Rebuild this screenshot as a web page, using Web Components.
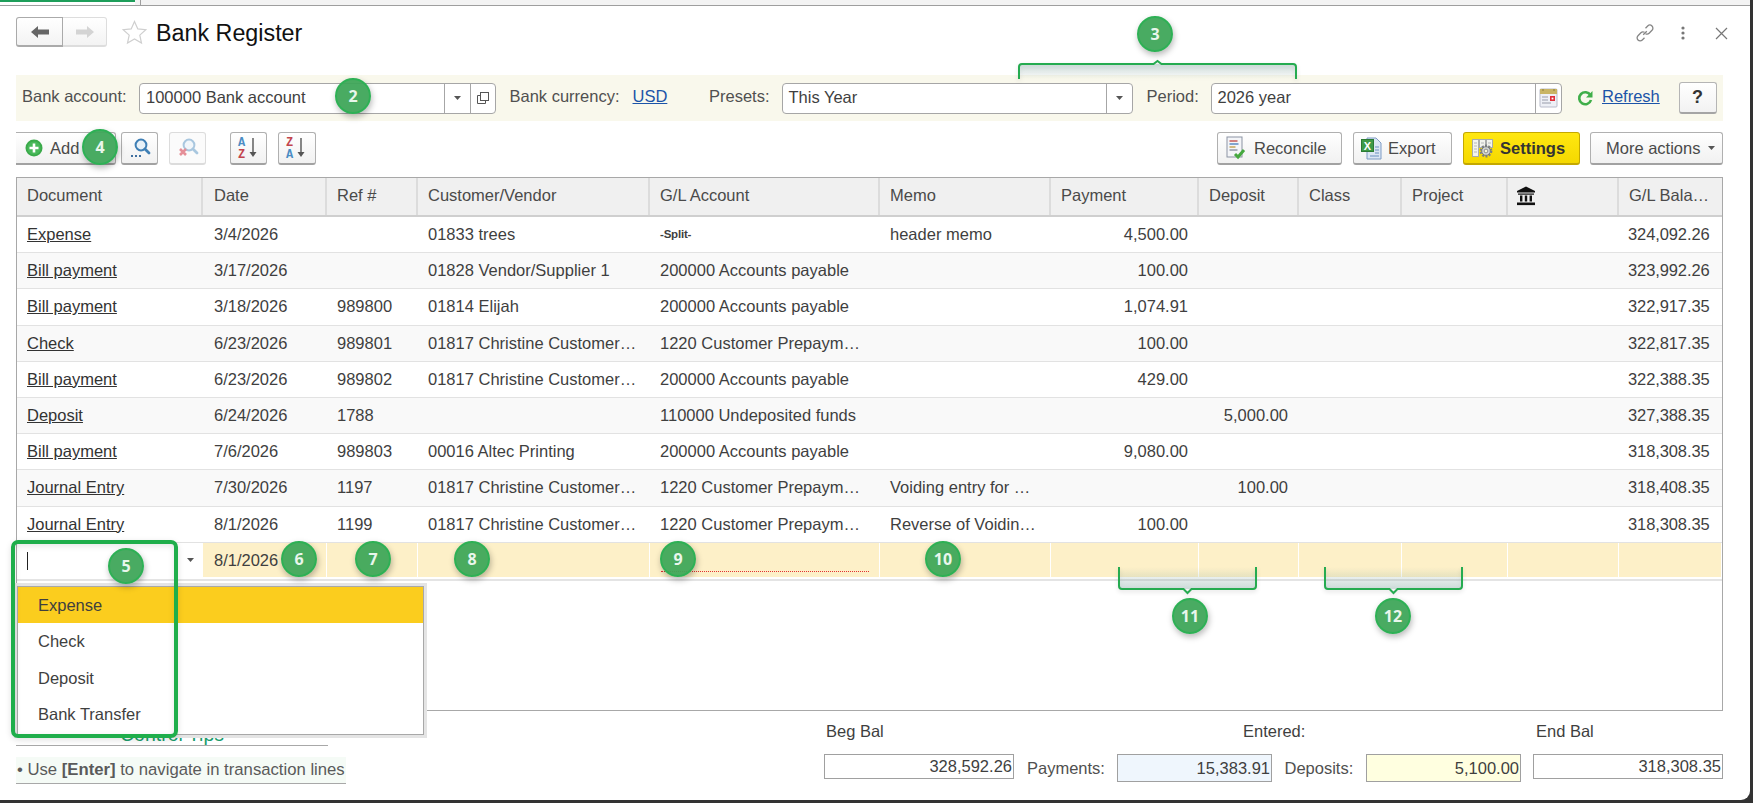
<!DOCTYPE html>
<html lang="en">
<head>
<meta charset="utf-8">
<title>Bank Register</title>
<style>
  html, body { margin: 0; padding: 0; background: #333; overflow: hidden; }
  body { width: 1753px; height: 803px; font: 16.5px "Liberation Sans", Arial, sans-serif; color: #3f3f3f; }
</style>
</head>
<body>
<br-app>
  <br-tabs slot="tabs"></br-tabs>
  <br-titlebar heading="Bank Register"></br-titlebar>
  <br-filterbar></br-filterbar>
  <br-toolbar></br-toolbar>
  <br-register></br-register>
  <br-footer></br-footer>

  <br-dropdown slot="overlay">
    <div class="active">Expense</div>
    <div>Check</div>
    <div>Deposit</div>
    <div>Bank Transfer</div>
  </br-dropdown>
  <br-callout-box slot="overlay"></br-callout-box>

  <br-bracket slot="overlay" dir="down" x="1018" y="60" w="279"></br-bracket>
  <br-bracket slot="overlay" dir="up" x="1118" y="567" w="139"></br-bracket>
  <br-bracket slot="overlay" dir="up" x="1324" y="567" w="139"></br-bracket>

  <br-badge slot="overlay" x="335" y="78">2</br-badge>
  <br-badge slot="overlay" x="1137" y="16">3</br-badge>
  <br-badge slot="overlay" x="82" y="129">4</br-badge>
  <br-badge slot="overlay" x="108" y="548">5</br-badge>
  <br-badge slot="overlay" x="281" y="541">6</br-badge>
  <br-badge slot="overlay" x="355" y="541">7</br-badge>
  <br-badge slot="overlay" x="454" y="541">8</br-badge>
  <br-badge slot="overlay" x="660" y="541">9</br-badge>
  <br-badge slot="overlay" x="925" y="541">10</br-badge>
  <br-badge slot="overlay" x="1172" y="598">11</br-badge>
  <br-badge slot="overlay" x="1375" y="598">12</br-badge>
</br-app>

<script>
// shared icons, all drawn by hand
const ICONS = {
  add: `<svg width="18" height="18" viewBox="0 0 18 18"><circle cx="9" cy="9" r="8.5" fill="#3aaa4a"/><circle cx="9" cy="9" r="6.6" fill="#49b85a"/><path d="M9 4.5v9M4.5 9h9" stroke="#fff" stroke-width="2.6"/></svg>`,
  search: `<svg width="22" height="22" viewBox="0 0 22 22"><circle cx="12" cy="8" r="5.4" fill="#e8f1f8" stroke="#3f7fb5" stroke-width="2"/><path d="M16 12l4 4" stroke="#3f7fb5" stroke-width="2.8" stroke-linecap="round"/><path d="M2 19h2M6 19h2M10 19h2" stroke="#3f6f9f" stroke-width="2"/></svg>`,
  clear: `<svg width="22" height="22" viewBox="0 0 22 22"><circle cx="12" cy="8" r="5.4" fill="#f1f6fa" stroke="#a9c7df" stroke-width="2"/><path d="M16 12l4 4" stroke="#a9c7df" stroke-width="2.8" stroke-linecap="round"/><path d="M3 12l6 6M9 12l-6 6" stroke="#e58f98" stroke-width="2.6"/></svg>`,
  az: `<svg width="24" height="26" viewBox="0 0 24 26"><text x="1" y="11" font-family="Liberation Mono" font-weight="700" font-size="12" fill="#4a8cc4">A</text><text x="1" y="23" font-family="Liberation Mono" font-weight="700" font-size="12" fill="#c2444c">Z</text><path d="M16 3v17" stroke="#555" stroke-width="1.4"/><path d="M12.5 17h7l-3.5 5z" fill="#555"/></svg>`,
  za: `<svg width="24" height="26" viewBox="0 0 24 26"><text x="1" y="11" font-family="Liberation Mono" font-weight="700" font-size="12" fill="#c2444c">Z</text><text x="1" y="23" font-family="Liberation Mono" font-weight="700" font-size="12" fill="#4a8cc4">A</text><path d="M16 3v17" stroke="#555" stroke-width="1.4"/><path d="M12.5 17h7l-3.5 5z" fill="#555"/></svg>`,
  reconcile: `<svg width="20" height="24" viewBox="0 0 20 24"><rect x="1" y="1" width="15" height="20" fill="#f4f5f8" stroke="#8b93a3"/><path d="M3.5 5h8" stroke="#c0504d" stroke-width="1.4"/><path d="M3.5 8h9" stroke="#4f81bd" stroke-width="1.4"/><path d="M3.5 11h6" stroke="#c0a04d" stroke-width="1.4"/><path d="M3.5 14h8" stroke="#8b93a3" stroke-width="1.4"/><path d="M9 18l3 3 6-7" fill="none" stroke="#46a93f" stroke-width="3"/></svg>`,
  excel: `<svg width="21" height="24" viewBox="0 0 21 24"><path d="M6 2h9l5 5v16H6z" fill="#dbe6f4" stroke="#7f9cc5"/><path d="M14 11h4M14 14h4M14 17h4M9 20h9" stroke="#6a8fc0"/><rect x="0.5" y="3.5" width="12" height="12" fill="#3d9a47" stroke="#2b7a35"/><text x="6.5" y="13.5" text-anchor="middle" font-family="Liberation Sans" font-weight="700" font-size="11" fill="#fff">X</text></svg>`,
  settings: `<svg width="22" height="20" viewBox="0 0 22 20"><rect x="0.5" y="1.5" width="6" height="17" fill="#f3f3ee" stroke="#a9abab"/><rect x="7.5" y="1.5" width="6" height="8" fill="#f3f3ee" stroke="#a9abab"/><rect x="14.5" y="1.5" width="6" height="8" fill="#f3f3ee" stroke="#a9abab"/><path d="M2 5h3M2 8h3M2 11h3M2 14h3M9 5h3M16 5h3" stroke="#b5b7b7"/><circle cx="14" cy="13" r="5.2" fill="none" stroke="#7c7f82" stroke-width="2.4" stroke-dasharray="2 1.27"/><circle cx="14" cy="13" r="4.3" fill="#d6d8d8" stroke="#74777a" stroke-width="1"/><circle cx="14" cy="13" r="1.9" fill="#f7f5d8" stroke="#74777a" stroke-width="0.8"/></svg>`,
  calendar: `<svg width="19" height="20" viewBox="0 0 19 20"><rect x="1" y="1" width="17" height="18" rx="1" fill="#eef0f6" stroke="#b9bccb"/><rect x="1" y="1" width="17" height="5" fill="#c9b565"/><path d="M4 1v2M15 1v2" stroke="#8c7b3a"/><path d="M3 9h6M3 12h6M3 15h9" stroke="#b5b8c4" stroke-width="1.4"/><rect x="11" y="8" width="5" height="5" fill="#e0303a"/><rect x="12.6" y="9.6" width="1.8" height="1.8" fill="#fff"/></svg>`,
  refresh: `<svg width="16" height="18" viewBox="0 0 16 18"><path d="M13.4 6.2A6 6 0 1 0 14 11" fill="none" stroke="#3fae49" stroke-width="2.6"/><path d="M15.5 2v6.5H9z" fill="#3fae49"/></svg>`,
  bank: `<svg width="20" height="20" viewBox="0 0 20 20"><path d="M10 0.5L19 5v1.5H1V5z" fill="#111"/><path d="M2 7.5h16v1.2H2z" fill="#111"/><path d="M4 9.5h2.4v6H4zM8.8 9.5h2.4v6H8.8zM13.6 9.5H16v6h-2.4z" fill="#111"/><rect x="1" y="16.5" width="18" height="2.6" fill="#111"/></svg>`,
  arrowBack: `<svg width="18" height="12" viewBox="0 0 18 12"><path d="M0 6l7-6v3.6h11v4.8H7V12z" fill="COLOR"/></svg>`,
  arrowFwd: `<svg width="18" height="12" viewBox="0 0 18 12"><path d="M18 6l-7-6v3.6H0v4.8h11V12z" fill="COLOR"/></svg>`,
  star: `<svg width="25" height="25" viewBox="0 0 25 25"><path d="M12.5 1.5l3.3 7.4 8 .8-6 5.4 1.7 7.9-7-4-7 4 1.7-7.9-6-5.4 8-.8z" fill="#fff" stroke="#cfcfcf" stroke-width="1.2"/></svg>`,
  link: `<svg width="20" height="20" viewBox="0 0 20 20" fill="none" stroke="#858585" stroke-width="1.3"><path d="M8.2 11.8l3.6-3.6"/><path d="M10.5 5.2l2.2-2.2a3 3 0 0 1 4.3 4.3l-2.9 2.9a3 3 0 0 1-3.6.5"/><path d="M9.5 14.8l-2.2 2.2A3 3 0 0 1 3 12.7l2.9-2.9a3 3 0 0 1 3.6-.5"/></svg>`,
  dots: `<svg width="4" height="14" viewBox="0 0 4 14"><circle cx="2" cy="2" r="1.6" fill="#777"/><circle cx="2" cy="7" r="1.6" fill="#777"/><circle cx="2" cy="12" r="1.6" fill="#777"/></svg>`,
  close: `<svg width="13" height="13" viewBox="0 0 13 13"><path d="M1 1l11 11M12 1L1 12" stroke="#777" stroke-width="1.2"/></svg>`,
  caret: `<svg width="7" height="4" viewBox="0 0 7 4"><path d="M0 0h7L3.5 4z" fill="#555"/></svg>`,
  open: `<svg width="12" height="12" viewBox="0 0 12 12" fill="none" stroke="#555"><rect x="3.5" y="0.5" width="8" height="8" fill="#fff"/><path d="M3.5 3.5h-3v8h8v-3"/></svg>`,
};

class BrApp extends HTMLElement {
  constructor() {
    super();
    const template = document.createElement('template');
    template.innerHTML = `
      <style>
        :host { display: flex; flex-direction: column; position: relative; width: 1750px; height: 800px; background: #fff; border-bottom-right-radius: 9px; overflow: hidden; }
        .content { display: flex; flex-direction: column; flex: 1; padding: 0 27px 0 16px; min-height: 0; }
      </style>
      <slot name="tabs"></slot>
      <div class="content"><slot></slot></div>
      <slot name="overlay"></slot>
    `;
    this.attachShadow({ mode: 'open' });
    this.shadowRoot.appendChild(template.content.cloneNode(true));
  }
}
customElements.define('br-app', BrApp);

class BrTabs extends HTMLElement {
  constructor() {
    super();
    this.attachShadow({ mode: 'open' }).innerHTML = `
      <style>
        :host { display: flex; height: 5px; background: #f3f3f3; border-bottom: 1px solid #9e9e9e; }
        .tab { width: 135px; background: #fff; border-top: 2px solid #1e9e5a; box-sizing: border-box; }
        .sep { margin-left: 5px; width: 1px; background: #9e9e9e; }
      </style>
      <div class="tab"></div><div class="sep"></div>
    `;
  }
}
customElements.define('br-tabs', BrTabs);

class BrTitlebar extends HTMLElement {
  constructor() {
    super();
    this.attachShadow({ mode: 'open' }).innerHTML = `
      <style>
        :host { display: flex; align-items: flex-start; height: 69px; box-sizing: border-box; padding-top: 11px; }
        .nav { display: flex; width: 91px; height: 30px; box-sizing: border-box; }
        .nav div { display: flex; align-items: center; justify-content: center; box-sizing: border-box; height: 30px; background: linear-gradient(#fff, #f3f3f3); border: 1px solid #c4c4c4; border-bottom: 2px solid #b4b4b4; }
        .back { width: 47px; border-radius: 3px 0 0 3px; border-color: #aaa !important; }
        .fwd { width: 44px; border-left: 0 !important; border-radius: 0 3px 3px 0; border-color: #ddd !important; }
        .star { margin: 3px 0 0 15px; width: 25px; height: 25px; }
        h1 { margin: 2px 0 0 9px; font: 400 23.3px/28px "Liberation Sans", Arial, sans-serif; color: #111; flex: 1; }
        .icons { display: flex; align-items: center; margin-top: 6px; height: 20px; }
        .link { width: 20px; height: 20px; }
        .dots { width: 4px; height: 14px; margin-left: 26px; }
        .close { width: 13px; height: 13px; margin: 0 -5px 0 30px; }
        svg { display: block; }
      </style>
      <div class="nav">
        <div class="back">${ICONS.arrowBack.replace('COLOR', '#666')}</div>
        <div class="fwd">${ICONS.arrowFwd.replace('COLOR', '#d4d4d4')}</div>
      </div>
      <div class="star">${ICONS.star}</div>
      <h1></h1>
      <div class="icons">
        <div class="link">${ICONS.link}</div>
        <div class="dots">${ICONS.dots}</div>
        <div class="close">${ICONS.close}</div>
      </div>
    `;
    this.shadowRoot.querySelector('h1').textContent = this.getAttribute('heading');
  }
}
customElements.define('br-titlebar', BrTitlebar);

class BrCombo extends HTMLElement {
  constructor() {
    super();
    this.attachShadow({ mode: 'open' }).innerHTML = `
      <style>
        :host { display: flex; box-sizing: border-box; height: 31px; background: #fff; border: 1px solid #a6a6a6; border-radius: 4px; flex: none; color: #3f3f3f; }
        .val { flex: 1; padding-left: 6px; line-height: 27px; }
        .btn { display: flex; align-items: center; justify-content: center; border-left: 1px solid #a6a6a6; }
        svg { display: block; }
      </style>
      <div class="val"></div>
    `;
    this.shadowRoot.querySelector('.val').textContent = this.getAttribute('value');
    (this.getAttribute('buttons') || '').split(' ').forEach((name) => {
      const btn = document.createElement('div');
      btn.className = 'btn';
      btn.style.width = name === 'open' ? '24px' : '25px';
      btn.innerHTML = ICONS[name];
      this.shadowRoot.appendChild(btn);
    });
    this.style.width = this.getAttribute('w') + 'px';
  }
}
customElements.define('br-combo', BrCombo);

class BrFilterbar extends HTMLElement {
  constructor() {
    super();
    this.attachShadow({ mode: 'open' }).innerHTML = `
      <style>
        :host { display: flex; align-items: center; height: 46px; padding-left: 6px; background: #f9f8ec; }
        span { flex: none; color: #505050; position: relative; top: -2px; white-space: nowrap; }
        a { flex: none; color: #1c54a8; text-decoration: underline; position: relative; top: -2px; }
        svg { display: block; }
        .help { display: flex; align-items: center; justify-content: center; flex: none; box-sizing: border-box; width: 38px; height: 32px; margin-left: 19px; border: 1px solid #b5b5b5; border-bottom: 2px solid #a5a5a5; border-radius: 3px; background: linear-gradient(#fff, #f2f2f2); font-weight: 700; font-size: 18px; color: #333; }
      </style>
      <span style="width:117px">Bank account:</span>
      <br-combo w="357" value="100000 Bank account" buttons="caret open"></br-combo>
      <span style="margin-left:13.5px;width:123px">Bank currency:</span>
      <a style="width:35px">USD</a>
      <span style="margin-left:41.5px;width:72.5px">Presets:</span>
      <br-combo w="351" value="This Year" buttons="caret"></br-combo>
      <span style="margin-left:14px;width:64px">Period:</span>
      <br-combo w="351" value="2026 year" buttons="calendar"></br-combo>
      <div style="margin-left:15.5px;width:16px;flex:none">${ICONS.refresh}</div>
      <a style="margin-left:9px;width:57.5px">Refresh</a>
      <div class="help">?</div>
    `;
  }
}
customElements.define('br-filterbar', BrFilterbar);

class BrButton extends HTMLElement {
  constructor() {
    super();
    this.attachShadow({ mode: 'open' }).innerHTML = `
      <style>
        :host { display: flex; align-items: center; flex: none; box-sizing: border-box; height: 33px; background: linear-gradient(#fff, #f1f1f1); border: 1px solid #b0b0b0; border-bottom: 2px solid #a2a2a2; border-radius: 3px; color: #4a4a4a; white-space: nowrap; }
        :host([kind="default"]) { background: linear-gradient(#ffe711, #f5d800); border-color: #c4a800; font-weight: 700; color: #333; }
        :host([kind="off"]) { border-color: #dcdcdc; background: #fbfbfb; }
        :host([kind="flat"]) { border-left: 0; border-radius: 0 3px 3px 0; }
        :host([kind="icon"]), :host([kind="off"]) { justify-content: center; }
      </style>
      <slot></slot>
    `;
    this.style.width = this.getAttribute('w') + 'px';
    const icon = this.getAttribute('icon');
    if (icon) {
      const box = document.createElement('span');
      box.style.cssText = 'display:block;line-height:0;flex:none;margin-left:' + (this.getAttribute('pad') || 0) + 'px;margin-right:' + (this.getAttribute('gap') || 0) + 'px';
      box.innerHTML = ICONS[icon];
      this.shadowRoot.insertBefore(box, this.shadowRoot.querySelector('slot'));
    }
  }
}
customElements.define('br-button', BrButton);

class BrToolbar extends HTMLElement {
  constructor() {
    super();
    this.attachShadow({ mode: 'open' }).innerHTML = `
      <style>
        :host { display: flex; height: 33px; margin-top: 11px; }
        .more { display: block; margin-left: 8px; }
        .more svg { display: block; }
      </style>
      <br-button kind="flat" w="100" icon="add" pad="9" gap="7">Add</br-button>
      <br-button kind="icon" w="37" icon="search" style="margin-left:5px"></br-button>
      <br-button kind="off" w="37" icon="clear" style="margin-left:11px"></br-button>
      <br-button kind="icon" w="37" icon="az" style="margin-left:24px"></br-button>
      <br-button kind="icon" w="38" icon="za" style="margin-left:11px"></br-button>
      <br-button w="125" icon="reconcile" pad="8" gap="8" style="margin-left:auto">Reconcile</br-button>
      <br-button w="99" icon="excel" pad="7" gap="6" style="margin-left:11px">Export</br-button>
      <br-button kind="default" w="117" icon="settings" pad="8" gap="6" style="margin-left:11px">Settings</br-button>
      <br-button w="133" pad="15" style="margin-left:10px;padding-left:15px">More actions<span class="more">${ICONS.caret}</span></br-button>
    `;
  }
}
customElements.define('br-toolbar', BrToolbar);

const COLUMNS = '186px 124px 91px 232px 230px 171px 148px 100px 103px 106px 111px 103px';
const HEADERS = ['Document', 'Date', 'Ref #', 'Customer/Vendor', 'G/L Account', 'Memo', 'Payment', 'Deposit', 'Class', 'Project', '', 'G/L Bala…'];
const ROWS = [
  ['Expense', '3/4/2026', '', '01833 trees', '-Split-', 'header memo', '4,500.00', '', '324,092.26'],
  ['Bill payment', '3/17/2026', '', '01828 Vendor/Supplier 1', '200000 Accounts payable', '', '100.00', '', '323,992.26'],
  ['Bill payment', '3/18/2026', '989800', '01814 Elijah', '200000 Accounts payable', '', '1,074.91', '', '322,917.35'],
  ['Check', '6/23/2026', '989801', '01817 Christine Customer…', '1220 Customer Prepaym…', '', '100.00', '', '322,817.35'],
  ['Bill payment', '6/23/2026', '989802', '01817 Christine Customer…', '200000 Accounts payable', '', '429.00', '', '322,388.35'],
  ['Deposit', '6/24/2026', '1788', '', '110000 Undeposited funds', '', '', '5,000.00', '327,388.35'],
  ['Bill payment', '7/6/2026', '989803', '00016 Altec Printing', '200000 Accounts payable', '', '9,080.00', '', '318,308.35'],
  ['Journal Entry', '7/30/2026', '1197', '01817 Christine Customer…', '1220 Customer Prepaym…', 'Voiding entry for …', '', '100.00', '318,408.35'],
  ['Journal Entry', '8/1/2026', '1199', '01817 Christine Customer…', '1220 Customer Prepaym…', 'Reverse of Voidin…', '100.00', '', '318,308.35'],
];

class BrRegister extends HTMLElement {
  constructor() {
    super();
    this.attachShadow({ mode: 'open' }).innerHTML = `
      <style>
        :host { display: block; box-sizing: border-box; height: 534px; margin-top: 12px; border: 1px solid #a8a8a8; border-bottom-width: 1px; background: #fff; overflow: hidden; }
        .row { display: grid; grid-template-columns: ${COLUMNS}; box-sizing: border-box; }
        .cell { box-sizing: border-box; padding: 0 11px 0 10px; white-space: nowrap; }
        .cell:nth-child(2) { padding-left: 11px; }
        .head { height: 39px; background: #f0f0f0; border-bottom: 2px solid #cfcfcf; color: #4a4a4a; }
        .head .cell { line-height: 34px; border-right: 2px solid #dcdcdc; }
        .head .cell:last-child { border-right: 0; }
        .head svg { display: block; margin: 8px 0 0 -2px; }
        .data { height: 36.2px; border-bottom: 1px solid #e2e2e2; line-height: 35px; background: #fff; color: #3f3f3f; }
        .data:nth-child(even) { background: #f9f9f9; }
        .cell.num { text-align: right; }
        .cell.doc { text-decoration: underline; color: #333; }
        .cell.split { font-weight: 700; font-size: 11.5px; letter-spacing: -0.2px; }
        .cell.bal { padding-left: 9px; letter-spacing: -0.1px; }
        .entry { height: 34.4px; margin-top: 0.4px; background: #fdf0c8; line-height: 34px; color: #3f3f3f; }
        .entry .cell { border-right: 1px solid #fff; position: relative; }
        .entry .first { background: #fff; display: flex; align-items: center; justify-content: flex-end; padding-right: 9px; border: 0; }
        .caret { position: absolute; left: 10px; top: 9px; width: 1px; height: 18px; background: #222; }
        .dotted { position: absolute; left: 11px; right: 10px; top: 28px; border-bottom: 1px dotted #e23030; }
        .under { height: 2px; margin-top: 2px; background: #e4e4e4; }
      </style>
      <div class="row head"></div>
    `;
    const root = this.shadowRoot;
    const head = root.querySelector('.head');
    HEADERS.forEach((text, i) => {
      const cell = document.createElement('div');
      cell.className = 'cell';
      if (i === 10) cell.innerHTML = ICONS.bank;
      else cell.textContent = text;
      head.appendChild(cell);
    });

    ROWS.forEach((r) => {
      const row = document.createElement('div');
      row.className = 'row data';
      // class, project and the bank column are empty on every line
      const values = [r[0], r[1], r[2], r[3], r[4], r[5], r[6], r[7], '', '', '', r[8]];
      values.forEach((text, i) => {
        const cell = document.createElement('div');
        cell.className = 'cell';
        cell.textContent = text;
        if (i === 0) cell.classList.add('doc');
        if (i === 6 || i === 7) cell.classList.add('num');
        if (i === 11) cell.classList.add('bal');
        if (text === '-Split-') cell.classList.add('split');
        row.appendChild(cell);
      });
      root.appendChild(row);
    });

    const entry = document.createElement('div');
    entry.className = 'row entry';
    entry.innerHTML = `
      <div class="cell first"><div class="caret"></div>${ICONS.caret}</div>
      <div class="cell">8/1/2026</div>
      <div class="cell"></div><div class="cell"></div>
      <div class="cell"><div class="dotted"></div></div>
      <div class="cell"></div><div class="cell"></div><div class="cell"></div>
      <div class="cell"></div><div class="cell"></div><div class="cell"></div><div class="cell"></div>
    `;
    root.appendChild(entry);
    const under = document.createElement('div');
    under.className = 'under';
    root.appendChild(under);
  }
}
customElements.define('br-register', BrRegister);

class BrFooter extends HTMLElement {
  constructor() {
    super();
    this.attachShadow({ mode: 'open' }).innerHTML = `
      <style>
        :host { display: flex; flex: 1; color: #3f3f3f; }
        .tips { flex: none; width: 330px; padding-top: 20px; }
        .tips h4 { margin: 0; width: 312px; height: 15px; box-sizing: border-box; border-bottom: 1px solid #a8a8a8; font: 400 19.5px/7px "Liberation Sans", Arial, sans-serif; color: #1a9c6c; padding-left: 104px; white-space: nowrap; }
        .tip { margin-top: 11px; height: 27px; box-sizing: border-box; background: #f5fbf6; border-bottom: 1px solid #a8a8a8; line-height: 26px; padding-left: 1px; font-size: 16.7px; color: #5a5a5a; white-space: nowrap; }
        .totals { flex: none; margin-left: 478px; width: 899px; display: grid; grid-template-columns: 190px 13px 90px 155px 12.5px 81.5px 155px 12px 190px; grid-template-rows: 20px 25px; row-gap: 13px; padding-top: 10px; align-items: start; }
        .cap { line-height: 20px; grid-row: 1; }
        .lbl { grid-row: 2; line-height: 28px; color: #505050; }
        .box { grid-row: 2; box-sizing: border-box; height: 25px; border: 1px solid #a0a0a0; background: #fff; text-align: right; line-height: 22px; padding-right: 1px; }
        .tall { height: 28px; line-height: 26px; }
      </style>
      <div class="tips">
        <h4>Control Tips</h4>
        <div class="tip">• Use <b>[Enter]</b> to navigate in transaction lines</div>
      </div>
      <div class="totals">
        <div class="cap" style="grid-column:1;padding-left:2px">Beg Bal</div>
        <div class="cap" style="grid-column:3 / 8;padding-left:216px">Entered:</div>
        <div class="cap" style="grid-column:9;padding-left:3px">End Bal</div>
        <div class="box" style="grid-column:1">328,592.26</div>
        <div class="lbl" style="grid-column:3">Payments:</div>
        <div class="box tall" style="grid-column:4;background:#eff6fd">15,383.91</div>
        <div class="lbl" style="grid-column:6">Deposits:</div>
        <div class="box tall" style="grid-column:7;background:#ffffe0">5,100.00</div>
        <div class="box" style="grid-column:9">318,308.35</div>
      </div>
    `;
  }
}
customElements.define('br-footer', BrFooter);

// the open list of the document cell, lies over the grid
class BrDropdown extends HTMLElement {
  constructor() {
    super();
    this.attachShadow({ mode: 'open' }).innerHTML = `
      <style>
        :host { position: absolute; left: 17px; top: 586px; width: 407px; height: 149px; box-sizing: border-box; background: #fff; border: 1px solid #a8a8a8; box-shadow: 0 0 0 3px #e4e4e4; }
        ::slotted(div) { height: 36.3px; line-height: 37px; padding-left: 20px; color: #3f3f3f; }
        ::slotted(.active) { background: #fbcd1e; }
      </style>
      <slot></slot>
    `;
  }
}
customElements.define('br-dropdown', BrDropdown);

class BrCalloutBox extends HTMLElement {
  constructor() {
    super();
    this.attachShadow({ mode: 'open' }).innerHTML = `
      <style>
        :host { position: absolute; left: 11px; top: 540px; width: 167px; height: 198px; box-sizing: border-box; border: 4px solid #1fae4b; border-radius: 7px; box-shadow: 0 2px 6px rgba(0,0,0,.12), inset 0 2px 6px rgba(0,0,0,.1); pointer-events: none; }
      </style>
    `;
  }
}
customElements.define('br-callout-box', BrCalloutBox);

class BrBracket extends HTMLElement {
  constructor() {
    super();
    const x = Number(this.getAttribute('x'));
    const y = Number(this.getAttribute('y'));
    const w = Number(this.getAttribute('w'));
    const up = this.getAttribute('dir') === 'up';
    const mid = w / 2;
    const h = up ? 27 : 20;
    const id = 'g' + x;
    const line = up
      ? `M1 0V19q0 3 3 3H${mid - 4}l4 4 4-4H${w - 4}q3 0 3-3V0`
      : `M1 19V7q0-3 3-3H${mid - 4}l4-3 4 3H${w - 4}q3 0 3 3V19`;
    const area = up
      ? `M1 0V19q0 3 3 3H${w - 4}q3 0 3-3V0z`
      : `M1 19V7q0-3 3-3H${w - 4}q3 0 3 3V19z`;
    this.attachShadow({ mode: 'open' }).innerHTML = `
      <style>
        :host { position: absolute; left: ${x}px; top: ${y}px; width: ${w}px; height: ${h}px; pointer-events: none; filter: drop-shadow(0 2px 2px rgba(0,0,0,.12)); }
        svg { display: block; overflow: visible; }
      </style>
      <svg width="${w}" height="${h}" viewBox="0 0 ${w} ${h}">
        <defs><linearGradient id="${id}" x1="0" x2="0" y1="${up ? 1 : 0}" y2="${up ? 0 : 1}">
          <stop offset="0" stop-color="#7da7a0" stop-opacity=".34"/><stop offset="1" stop-color="#7da7a0" stop-opacity="0"/>
        </linearGradient></defs>
        <path d="${area}" fill="url(#${id})"/>
        <path d="${line}" fill="none" stroke="#25ab50" stroke-width="2"/>
      </svg>
    `;
  }
}
customElements.define('br-bracket', BrBracket);

class BrBadge extends HTMLElement {
  constructor() {
    super();
    this.attachShadow({ mode: 'open' }).innerHTML = `
      <style>
        :host { position: absolute; display: flex; align-items: center; justify-content: center; box-sizing: border-box; width: 36px; height: 36px; border-radius: 50%; background: rgba(62,166,88,.94); border: 2px solid #2eb055; box-shadow: 1px 3px 6px rgba(0,0,0,.28); color: #e9f6ec; font: 700 16px "Open Sans", sans-serif; }
      </style>
      <slot></slot>
    `;
    this.style.left = this.getAttribute('x') + 'px';
    this.style.top = this.getAttribute('y') + 'px';
  }
}
customElements.define('br-badge', BrBadge);
</script>
</body>
</html>
